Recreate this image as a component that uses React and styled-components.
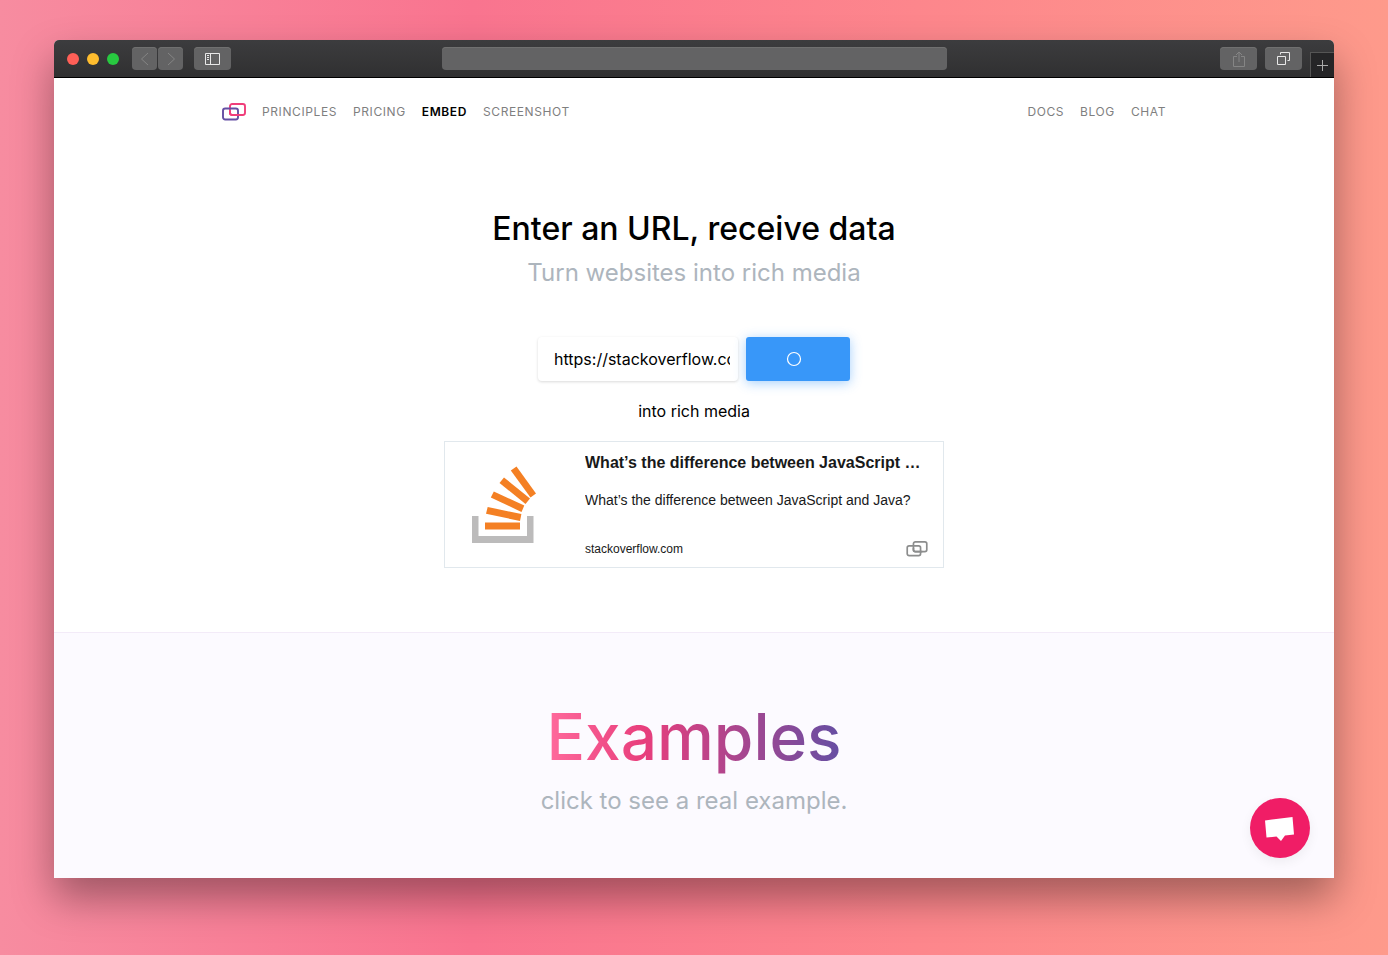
import React from "react";
import styled, { createGlobalStyle, css } from "styled-components";

const GlobalStyle = createGlobalStyle`
  *, *::before, *::after { box-sizing: border-box; }
  body {
    margin: 0;
    font-family: Inter, "Liberation Sans", sans-serif;
    color: #000;
  }
  h1, h2, p { margin: 0; font-weight: 400; }
`;

const Desktop = styled.div`
  min-height: 100vh;
  padding: 40px 54px 77px;
  background: linear-gradient(90deg, #f78ca0 0%, #f9748f 34%, #fd868c 66%, #fe9a8b 100%);
`;

const Window = styled.div`
  position: relative;
  border-radius: 5px 5px 0 0;
  background: #fff;
  box-shadow: 0 20px 40px rgba(0, 0, 0, 0.36);
`;

const TitleBar = styled.div`
  display: flex;
  align-items: center;
  height: 38px;
  border-bottom: 1px solid #000;
  border-radius: 5px 5px 0 0;
  background: linear-gradient(#3c3c3e, #303031);
  overflow: hidden;
`;

const BarSide = styled.div`
  display: flex;
  flex: 1;
  align-items: center;
  align-self: stretch;
  padding-left: 13px;
  justify-content: ${(p) => (p.$end ? "flex-end" : "flex-start")};
`;

const Light = styled.span`
  width: 12px;
  height: 12px;
  margin-right: 8px;
  border-radius: 50%;
  background: ${(p) => p.$color};
`;

const ToolButton = styled.button`
  display: flex;
  align-items: center;
  justify-content: center;
  width: ${(p) => (p.$small ? 25 : 37)}px;
  height: 23px;
  margin: 0 ${(p) => p.$gap || 0}px 0 0;
  padding: 0;
  border: 0;
  border-radius: 4px;
  background: #636364;
  box-shadow: inset 0 1px 0 #707070;
  color: ${(p) => (p.$dim ? "#858585" : "#e8e8e8")};
`;

const Spacer = styled.span`
  width: 5px;
`;

const Address = styled.input`
  width: 40%;
  max-width: 505px;
  height: 23px;
  padding: 0 8px;
  border: 0;
  border-radius: 4px;
  background: #636364;
  box-shadow: inset 0 1px 0 #707070;
  color: #fff;
`;

const NewTab = styled.button`
  display: flex;
  align-items: center;
  justify-content: center;
  align-self: flex-end;
  width: 24px;
  height: 25px;
  padding: 0;
  border: 1px solid #555;
  border-width: 1px 0 0 1px;
  background: #252527;
  color: #aaa;
`;

const Nav = styled.nav`
  display: flex;
  justify-content: space-between;
  width: 100%;
  max-width: 960px;
  margin: 0 auto;
  padding: 24px 8px;
`;

const NavGroup = styled.div`
  display: flex;
  align-items: center;
  gap: 16px;
  height: 20px;
`;

const NavLink = styled.a`
  color: ${(p) => (p.$active ? "#000" : "#7f7f7f")};
  font-size: 12px;
  font-weight: ${(p) => (p.$active ? 600 : 400)};
  line-height: 20px;
  letter-spacing: 0.05em;
  text-decoration: none;
  text-transform: uppercase;
`;

const Hero = styled.section`
  display: flex;
  flex-direction: column;
  align-items: center;
  padding: 59px 16px 64px;
`;

const Title = styled.h1`
  font-size: 32px;
  font-weight: 500;
  line-height: 48px;
`;

const Lead = styled.p`
  color: #adb5bd;
  font-size: 24px;
  line-height: 40px;
`;

const Form = styled.form`
  display: flex;
  gap: 8px;
  margin-top: 44px;
`;

const UrlInput = styled.input`
  width: 200px;
  height: 44px;
  padding: 0 8px 0 16px;
  border: 0;
  border-radius: 4px;
  background: #fff;
  box-shadow: 0 1px 3px rgba(0, 0, 0, 0.15);
  font-family: inherit;
  font-size: 16px;
  color: #000;
`;

const Submit = styled.button`
  display: flex;
  align-items: center;
  justify-content: center;
  width: 104px;
  height: 44px;
  padding: 0 8px 0 0;
  border: 0;
  border-radius: 3px;
  background: #3897f9;
  box-shadow: 0 2px 12px rgba(56, 151, 249, 0.45);
  color: #fff;
`;

const Caption = styled.p`
  margin: 18px 0;
  font-size: 16px;
  line-height: 24px;
`;

const Card = styled.a`
  display: flex;
  width: 100%;
  max-width: 500px;
  min-height: 127px;
  border: 1px solid #e1e8ed;
  background: #fff;
  color: #181919;
  font-family: "Liberation Sans", sans-serif;
  text-decoration: none;
`;

const CardMedia = styled.div`
  display: flex;
  align-items: center;
  justify-content: center;
  flex: 0 0 125px;
  padding-right: 6px;
`;

const CardBody = styled.div`
  display: flex;
  flex: 1;
  flex-direction: column;
  min-width: 0;
  padding: 8px 15px;
`;

const ellipsis = css`
  overflow: hidden;
  text-overflow: ellipsis;
  white-space: nowrap;
`;

const CardTitle = styled.h2`
  ${ellipsis}
  font-size: 16px;
  font-weight: 700;
  line-height: 26px;
`;

const CardText = styled.p`
  ${ellipsis}
  margin-top: 14px;
  font-size: 14px;
  line-height: 20px;
`;

const CardFooter = styled.footer`
  display: flex;
  align-items: center;
  justify-content: space-between;
  margin-top: auto;
  font-size: 12px;
  line-height: 20px;
`;

const Examples = styled.section`
  padding: 60px 16px 57px;
  border-top: 1px solid #f3ebf8;
  background: #fcfaff;
  text-align: center;
`;

const ExamplesTitle = styled.h2`
  width: fit-content;
  margin: 0 auto;
  background: linear-gradient(90deg, #ff6a9c 0%, #e83e7c 33%, #654ea3 100%);
  background-clip: text;
  -webkit-background-clip: text;
  color: transparent;
  font-size: 64px;
  font-weight: 500;
  line-height: 88px;
`;

const ChatButton = styled.button`
  position: absolute;
  right: 24px;
  bottom: 20px;
  width: 60px;
  height: 60px;
  padding: 0;
  border: 0;
  border-radius: 50%;
  background: #f01d66;
  box-shadow: 0 4px 12px rgba(0, 0, 0, 0.06);
`;

const LinksLogo = ({ width, height, top, bottom }) => (
  <svg width={width} height={height} viewBox="0 0 24 18" fill="none" strokeWidth="1.900" aria-hidden="true">
    <rect x="8" y="1" width="15" height="11" rx="2.200" stroke={top} />
    <rect x="1" y="5.500" width="15" height="11" rx="2.200" stroke={bottom} />
    <path d="M8 7.500V9.800Q8 12 10.200 12H18" stroke={top} />
  </svg>
);

const StackOverflowLogo = () => (
  <svg width="66" height="78" viewBox="0 0 66 78" role="img" aria-label="Stack Overflow">
    <path d="M0 50H6.500V70H55V50H61.500V77H0Z" fill="#bcbbbb" />
    <g fill="#f48024">
      <path d="M13 56.500H48V63.500H13Z" />
      <path d="M15.700 41L49.400 48L48 55L14 47.700Z" />
      <path d="M21.800 25.500L52.300 39.500L49.500 46L18.800 31.500Z" />
      <path d="M32 11.500L58 32.500L53.500 38L27.500 17Z" />
      <path d="M44.500 0.500L64 27.500L58.500 31.500L38.800 4.500Z" />
    </g>
  </svg>
);

const leftLinks = ["Principles", "Pricing", "Embed", "Screenshot"];
const rightLinks = ["Docs", "Blog", "Chat"];

export default function App() {
  return (
    <>
      <GlobalStyle />
      <Desktop>
        <Window>
          <TitleBar>
            <BarSide>
              <Light $color="#ff5f57" />
              <Light $color="#ffbd2e" />
              <Light $color="#28c940" />
              <Spacer />
              <ToolButton $small $dim $gap={1} aria-label="Back">
                <svg width="10" height="14" viewBox="0 0 10 14" fill="none" stroke="currentColor"><path d="M8 1L1.500 7L8 13" /></svg>
              </ToolButton>
              <ToolButton $small $dim $gap={11} aria-label="Forward">
                <svg width="10" height="14" viewBox="0 0 10 14" fill="none" stroke="currentColor"><path d="M2 1L8.500 7L2 13" /></svg>
              </ToolButton>
              <ToolButton aria-label="Sidebar">
                <svg width="15" height="12" viewBox="0 0 15 12" fill="none" stroke="currentColor"><path d="M.5.5H14.500V11.500H.5ZM5.500.5V11.500M2 2.500H4M2 4.500H4M2 6.500H4" /></svg>
              </ToolButton>
            </BarSide>
            <Address aria-label="Address" />
            <BarSide $end>
              <ToolButton $dim $gap={8} aria-label="Share">
                <svg width="12" height="16" viewBox="0 0 12 16" fill="none" stroke="currentColor"><path d="M4 5.500H.5V15.500H11.500V5.500H8M6 11V1M3 4L6 1L9 4" /></svg>
              </ToolButton>
              <ToolButton $gap={8} aria-label="Tabs">
                <svg width="13" height="13" viewBox="0 0 13 13" fill="none" stroke="currentColor"><path d="M.5 4.500H8.500V12.500H.5ZM3.500 2.500V.5H12.500V8.500H10.500" /></svg>
              </ToolButton>
              <NewTab aria-label="New tab">
                <svg width="11" height="11" viewBox="0 0 11 11" stroke="currentColor"><path d="M0 5.500H11M5.500 0V11" /></svg>
              </NewTab>
            </BarSide>
          </TitleBar>
          <Nav>
            <NavGroup>
              <LinksLogo width={24} height={18} top="#f03e7a" bottom="#654ea3" />
              {leftLinks.map((name) => (
                <NavLink key={name} href="#" $active={name === "Embed"}>{name}</NavLink>
              ))}
            </NavGroup>
            <NavGroup>
              {rightLinks.map((name) => <NavLink key={name} href="#">{name}</NavLink>)}
            </NavGroup>
          </Nav>
          <Hero>
            <Title>Enter an URL, receive data</Title>
            <Lead>Turn websites into rich media</Lead>
            <Form onSubmit={(e) => e.preventDefault()}>
              <UrlInput
                aria-label="URL"
                defaultValue="https://stackoverflow.com/questions/245062/whats-the-difference-between-javascript-and-java"
              />
              <Submit aria-label="Loading">
                <svg width="16" height="16" viewBox="0 0 16 16" fill="none" stroke="currentColor"><circle cx="8" cy="8" r="6.500" strokeWidth="1.200" /></svg>
              </Submit>
            </Form>
            <Caption>into rich media</Caption>
            <Card href="#">
              <CardMedia><StackOverflowLogo /></CardMedia>
              <CardBody>
                <CardTitle>What’s the difference between JavaScript …</CardTitle>
                <CardText>What’s the difference between JavaScript and Java?</CardText>
                <CardFooter>
                  stackoverflow.com
                  <LinksLogo width={22} height={16} top="#8c8d8d" bottom="#8c8d8d" />
                </CardFooter>
              </CardBody>
            </Card>
          </Hero>
          <Examples>
            <ExamplesTitle>Examples</ExamplesTitle>
            <Lead>click to see a real example.</Lead>
          </Examples>
          <ChatButton aria-label="Open chat">
            <svg width="60" height="60" viewBox="0 0 60 60"><path d="M15 22.500L42.500 19L44 36.500L35 37.500L31 43L26.500 38.500L16.500 39.500Z" fill="#fff" /></svg>
          </ChatButton>
        </Window>
      </Desktop>
    </>
  );
}
